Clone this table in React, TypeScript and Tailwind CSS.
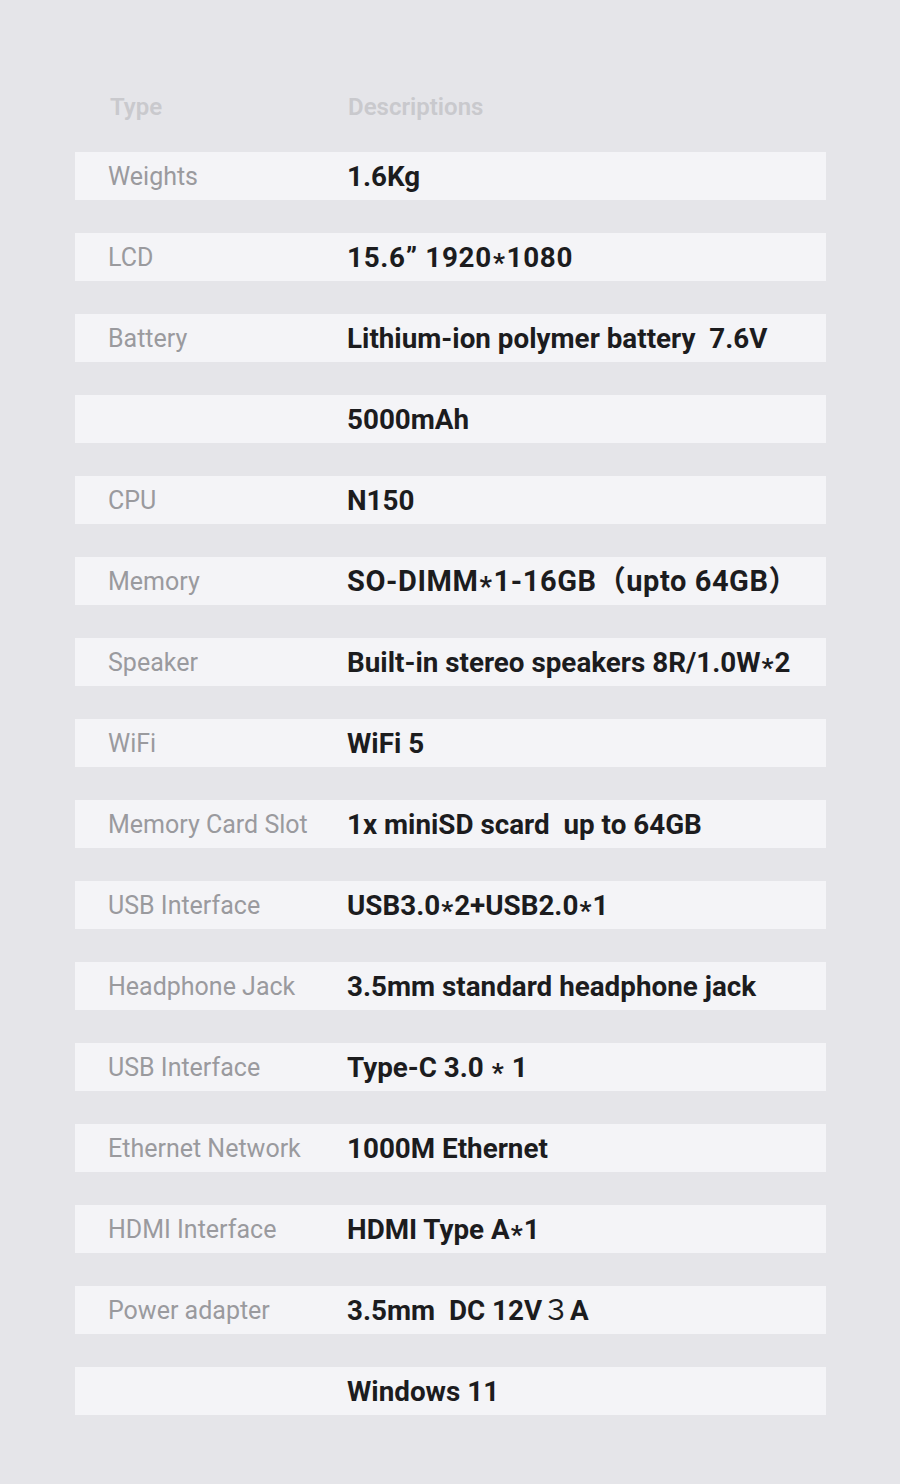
const rows: [string, string, string][] = [
  ["Weights", "1.6Kg", "text-[27.8px]"],
  ["LCD", "15.6\u201D 1920*1080", "text-[27.8px] tracking-[0.025em]"],
  ["Battery", "Lithium-ion polymer battery  7.6V", "text-[27.8px]"],
  ["", "5000mAh", "text-[27.8px]"],
  ["CPU", "N150", "text-[27.8px]"],
  ["Memory", "SO-DIMM*1-16GB\uFF08upto 64GB\uFF09", "text-[29px] tracking-[0.02em]"],
  ["Speaker", "Built-in stereo speakers 8R/1.0W*2", "text-[27.8px]"],
  ["WiFi", "WiFi 5", "text-[27.8px]"],
  ["Memory Card Slot", "1x miniSD scard  up to 64GB", "text-[27.8px]"],
  ["USB Interface", "USB3.0*2+USB2.0*1", "text-[27.8px]"],
  ["Headphone Jack", "3.5mm standard headphone jack", "text-[27.8px]"],
  ["USB Interface", "Type-C 3.0 * 1", "text-[27.8px]"],
  ["Ethernet Network", "1000M Ethernet", "text-[27.8px]"],
  ["HDMI Interface", "HDMI Type A*1", "text-[27.8px]"],
  ["Power adapter", "3.5mm  DC 12V\uFF13A", "text-[27.8px]"],
  ["", "Windows 11", "text-[27.8px]"],
];

// asterisks in the source sit mid-height, not raised;
// the full-width digit comes out of a lighter CJK face
function Value({ text }: { text: string }) {
  const parts = text.split("*");
  return (
    <>
      {parts.map((p, i) => (
        <span key={i}>
          {p.split("\uFF13").map((q, j, arr) => (
            <span key={j}>
              {q}
              {j < arr.length - 1 && (
                <span className="font-normal">{"\uFF13"}</span>
              )}
            </span>
          ))}
          {i < parts.length - 1 && (
            <span className="relative top-[0.17em] mx-px text-[0.95em]">*</span>
          )}
        </span>
      ))}
    </>
  );
}

export default function App() {
  return (
    <div
      className="min-h-[1484px] w-[900px] bg-[#e5e5e9] pt-[92px]"
      style={{ fontFamily: "Roboto, 'Noto Sans CJK SC', 'Noto Sans', sans-serif" }}
    >
      <div className="ml-[75px] w-[751px]">
        <div className="flex h-[30px] items-center text-[24px] font-semibold text-[#c9c9cd]">
          <span className="w-[273px] pl-[35px]">Type</span>
          <span>Descriptions</span>
        </div>
        <div className="mt-[30px] flex flex-col gap-[33px]">
          {rows.map(([label, value, size], i) => (
            <div
              key={i}
              className="flex h-12 items-center bg-[#f4f4f7] pt-[2px] whitespace-pre"
            >
              <span className="w-[272px] pl-[33px] text-[25px] text-[#9a9a9e]">
                {label}
              </span>
              <span className={"font-bold text-[#1c1c1e] " + size}>
                <Value text={value} />
              </span>
            </div>
          ))}
        </div>
      </div>
    </div>
  );
}
